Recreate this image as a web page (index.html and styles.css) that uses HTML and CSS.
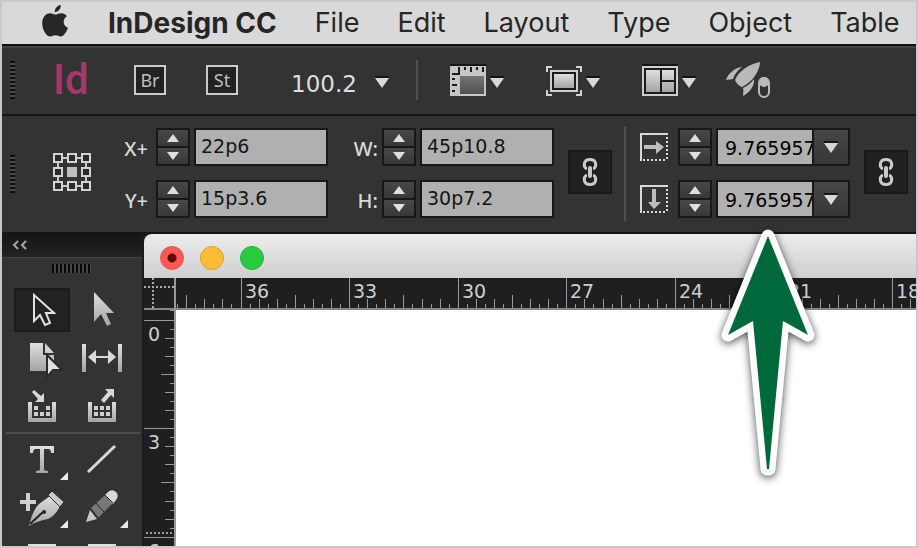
FILE: index.html
```html
<!DOCTYPE html>
<html lang="en">
<head>
<meta charset="utf-8">
<title>InDesign CC</title>
<link rel="stylesheet" href="styles.css">
</head>
<body>
<svg class="defs" width="0" height="0" aria-hidden="true">
  <defs>
    <linearGradient id="metal" x1="0" y1="0" x2="0" y2="1"><stop offset="0" stop-color="#dedede"/><stop offset="1" stop-color="#a4a4a4"/></linearGradient>
    <linearGradient id="shade" x1="0" y1="0" x2="0" y2="1"><stop offset="0" stop-color="#757575"/><stop offset="1" stop-color="#505050"/></linearGradient>
    <symbol id="down" viewBox="0 0 14 12"><path d="M0 0h14v2H0z" fill="#151515"/><path d="M0 2h14L7 12z" fill="#d8d8d8"/></symbol>
    <symbol id="up-small" viewBox="0 0 12 8"><path d="M6 0l6 8H0z" fill="#dedede"/></symbol>
    <symbol id="down-small" viewBox="0 0 12 8"><path d="M0 0h12L6 8z" fill="#dedede"/></symbol>
    <symbol id="link" viewBox="0 0 16 30">
      <g fill="none" stroke="#c9c9c9" stroke-width="3"><path d="M5 12C1 10 1 2.500 8 2.500S15 10 11 12"/><path d="M5 18c-4 2-4 9.500 3 9.500S15 20 11 18"/></g>
      <rect x="5" y="8" width="6" height="14" rx="3" fill="#202020"/>
      <rect x="6" y="9" width="4" height="12" rx="2" fill="#c9c9c9"/>
    </symbol>
  </defs>
</svg>
<div class="app">
  <nav class="menubar" aria-label="Menu bar">
    <a href="#" class="apple" aria-label="Apple"><svg width="26" height="32" viewBox="0 0 26 32"><path fill="#262626" d="M18.800 0c.3 3.700-2.600 7.100-6 7.200C12.400 3.700 15.500.5 18.800 0zM13.200 9.600c1.400 0 3.400-1.400 5.900-1.400 2.400.1 4.500 1.100 5.800 3-4.600 2.800-4.200 9.500 1 11.500-1.200 3.700-4.200 8.700-7 8.800-1.900 0-2.800-1.200-5.300-1.200s-3.500 1.200-5.300 1.200C4.300 31.500.2 24.400.2 18.400c0-6.300 3.800-9.900 7.800-10.100 2.300 0 3.900 1.300 5.200 1.300z"/></svg></a>
    <a href="#" class="name">InDesign CC</a>
    <a href="#">File</a><a href="#">Edit</a><a href="#">Layout</a><a href="#">Type</a><a href="#">Object</a><a href="#">Table</a>
  </nav>

  <header class="appbar">
    <span class="grip"></span>
    <span class="logo">Id</span>
    <button class="badge">Br</button>
    <button class="badge">St</button>
    <div class="zoom">
      <select aria-label="Zoom level"><option>100.2</option></select>
      <svg width="14" height="12"><use href="#down"/></svg>
    </div>
    <span class="rule"></span>
    <button class="view" aria-label="View options">
      <svg width="36" height="32" viewBox="0 0 36 32"><path d="M0 0h36v2H0z" fill="#151515"/><path d="M0 2h36v30H0z" fill="#c6c6c6"/><path d="M10 12h24v18H10z" fill="url(#shade)"/><path d="M9 3v7H2M2 15h3M2 21h5M2 27h3M15 3v3M21 3v5M27 3v3M33 3v5" fill="none" stroke="#1b1b1b" stroke-width="2"/></svg>
      <svg class="arrow" width="14" height="12"><use href="#down"/></svg>
    </button>
    <button class="view" aria-label="Screen mode">
      <svg width="36" height="32" viewBox="0 0 36 32"><path d="M1 8V3h5M30 3h5v5M35 26v5h-5M6 31H1v-5" fill="none" stroke="#d2d2d2" stroke-width="2"/><path d="M5 7h26v20H5z" fill="#1b1b1b" stroke="#cfcfcf" stroke-width="2"/><path d="M8 10h20v14H8z" fill="url(#metal)"/></svg>
      <svg class="arrow" width="14" height="12"><use href="#down"/></svg>
    </button>
    <button class="view" aria-label="Arrange documents">
      <svg width="36" height="32" viewBox="0 0 36 32"><path d="M0 0h36v2H0z" fill="#151515"/><path d="M1 3h34v28H1z" fill="#1b1b1b" stroke="#cfcfcf" stroke-width="2"/><path d="M4 6h14v22H4zM20 6h12v10H20zM20 18h12v10H20z" fill="url(#metal)"/></svg>
      <svg class="arrow" width="14" height="12"><use href="#down"/></svg>
    </button>
    <button class="gpu" aria-label="GPU performance">
      <svg width="44" height="36" viewBox="0 0 44 36"><g fill="#b9b9b9"><path d="M34 0c0 8-7 20-18 25-3-1-6-4-7-7C13 8 24 2 34 0z"/><path d="M16 5C8 6 2 12 0 18c2 0 5-1 7-1 1-4 4-8 9-12z"/><path d="M28 17c1 7-5 14-11 17 0-3 1-6 0-8 5-2 8-5 11-9z"/></g><rect x="33" y="16" width="10" height="19" rx="5" fill="#333" stroke="#b9b9b9" stroke-width="2"/><circle cx="38" cy="20" r="5" fill="#b9b9b9"/></svg>
    </button>
  </header>

  <section class="control" aria-label="Control panel">
    <span class="grip"></span>
    <button class="refpoint" aria-label="Reference point">
      <svg width="38" height="38" viewBox="0 0 38 38"><path d="M5 5h28v28H5z" fill="none" stroke="#c9c9c9" stroke-width="2"/><g fill="#2a2a2a" stroke="#d2d2d2" stroke-width="2"><path d="M1 1h8v8H1zM15 1h8v8h-8zM29 1h8v8h-8zM1 15h8v8H1zM29 15h8v8h-8zM1 29h8v8H1zM15 29h8v8h-8zM29 29h8v8h-8z"/></g><path d="M14 14h10v10H14z" fill="#c0c0c0"/></svg>
    </button>
    <div class="fields pos">
      <label for="x">X+</label>
      <span class="stepper"><button aria-label="Increase X"><svg width="12" height="8"><use href="#up-small"/></svg></button><button aria-label="Decrease X"><svg width="12" height="8"><use href="#down-small"/></svg></button></span>
      <input id="x" value="22p6">
      <label for="y">Y+</label>
      <span class="stepper"><button aria-label="Increase Y"><svg width="12" height="8"><use href="#up-small"/></svg></button><button aria-label="Decrease Y"><svg width="12" height="8"><use href="#down-small"/></svg></button></span>
      <input id="y" value="15p3.6">
    </div>
    <div class="fields size">
      <label for="w">W:</label>
      <span class="stepper"><button aria-label="Increase width"><svg width="12" height="8"><use href="#up-small"/></svg></button><button aria-label="Decrease width"><svg width="12" height="8"><use href="#down-small"/></svg></button></span>
      <input id="w" value="45p10.8">
      <label for="h">H:</label>
      <span class="stepper"><button aria-label="Increase height"><svg width="12" height="8"><use href="#up-small"/></svg></button><button aria-label="Decrease height"><svg width="12" height="8"><use href="#down-small"/></svg></button></span>
      <input id="h" value="30p7.2">
    </div>
    <button class="chain" aria-label="Constrain width and height"><svg width="16" height="30"><use href="#link"/></svg></button>
    <span class="rule"></span>
    <div class="fields scale">
      <label for="sx" aria-label="Scale X"><svg width="28" height="28" viewBox="0 0 28 28"><path d="M1 28V1h27" fill="none" stroke="#d8d8d8" stroke-width="2"/><path d="M27 4v24M3 27h24" fill="none" stroke="#d8d8d8" stroke-width="2" stroke-dasharray="2 2"/><path d="M4 12h12V8l8 6-8 7v-5H4z" fill="#bdbdbd"/></svg></label>
      <span class="stepper"><button aria-label="Increase scale X"><svg width="12" height="8"><use href="#up-small"/></svg></button><button aria-label="Decrease scale X"><svg width="12" height="8"><use href="#down-small"/></svg></button></span>
      <span class="combo"><input id="sx" value="9.765957"><button aria-label="Scale X presets"><svg width="14" height="12"><use href="#down"/></svg></button></span>
      <label for="sy" aria-label="Scale Y"><svg width="28" height="28" viewBox="0 0 28 28"><path d="M1 28V1h27" fill="none" stroke="#d8d8d8" stroke-width="2"/><path d="M27 4v24M3 27h24" fill="none" stroke="#d8d8d8" stroke-width="2" stroke-dasharray="2 2"/><path d="M12 4h4v13h5l-7 7-6-7h4z" fill="#bdbdbd"/></svg></label>
      <span class="stepper"><button aria-label="Increase scale Y"><svg width="12" height="8"><use href="#up-small"/></svg></button><button aria-label="Decrease scale Y"><svg width="12" height="8"><use href="#down-small"/></svg></button></span>
      <span class="combo"><input id="sy" value="9.765957"><button aria-label="Scale Y presets"><svg width="14" height="12"><use href="#down"/></svg></button></span>
    </div>
    <button class="chain" aria-label="Constrain scale"><svg width="16" height="30"><use href="#link"/></svg></button>
  </section>

  <main class="workspace">
    <aside class="tools" aria-label="Tools">
      <button class="collapse" aria-label="Collapse panel"><svg width="16" height="10" viewBox="0 0 16 10"><path d="M6 1L2 5l4 4M14 1l-4 4 4 4" fill="none" stroke="#a5a5a5" stroke-width="2"/></svg></button>
      <span class="grip-h"></span>
      <div class="toolgrid">
        <button class="on" aria-label="Selection"><svg width="56" height="44" viewBox="0 0 56 44"><path d="M20 7v26l6-6 5 10 5-2-4-10h8z" fill="#232323" stroke="#e2e2e2" stroke-width="2"/></svg></button>
        <button aria-label="Direct selection"><svg width="56" height="44" viewBox="0 0 56 44"><path d="M20 4v30l7-8 6 12 4-2-5-11h8z" fill="url(#metal)"/></svg></button>
        <button aria-label="Page"><svg width="56" height="44" viewBox="0 0 56 44"><path d="M16 7h13v12h11v16H16z" fill="url(#metal)"/><path d="M31 7l9 10h-9z" fill="#d0d0d0"/><path d="M33 19v22l6-7h9z" fill="#e0e0e0" stroke="#2b2b2b" stroke-width="2"/></svg></button>
        <button aria-label="Gap"><svg width="56" height="44" viewBox="0 0 56 44"><path d="M8 8h4v28H8zM44 8h4v28h-4z" fill="url(#metal)"/><path d="M14 21l8-7v6h12v-6l8 7-8 7v-6H22v6z" fill="#dadada"/></svg></button>
        <button aria-label="Content collector"><svg width="56" height="44" viewBox="0 0 56 44"><path d="M14 18h4v16h20V18h4v20H14z" fill="url(#metal)"/><path d="M20 22h4v4h-4zM32 22h4v4h-4zM20 28h4v4h-4zM26 28h4v4h-4zM32 28h4v4h-4z" fill="#cfcfcf"/><path d="M20 6l7 6 3-3v9h-9l3-3-6-7z" fill="#d8d8d8"/></svg></button>
        <button aria-label="Content placer"><svg width="56" height="44" viewBox="0 0 56 44"><path d="M14 18h4v16h20V18h4v20H14z" fill="url(#metal)"/><path d="M20 22h4v4h-4zM26 22h4v4h-4zM32 22h4v4h-4zM20 28h4v4h-4zM26 28h4v4h-4zM32 28h4v4h-4z" fill="#cfcfcf"/><path d="M31 5h9v9l-3-3-7 8-3-3 7-8z" fill="#d8d8d8"/></svg></button>
        <hr>
        <button aria-label="Type"><svg width="56" height="44" viewBox="0 0 56 44"><path d="M16 8h24v7h-3c0-3-1-4-3-4h-4v20c0 1 1 2 4 2v2H22v-2c3 0 4-1 4-2V11h-4c-2 0-3 1-3 4h-3z" fill="url(#metal)"/><path d="M54 34v8h-8z" fill="#e8e8e8"/></svg></button>
        <button aria-label="Line"><svg width="56" height="44" viewBox="0 0 56 44"><path d="M14 34L41 8" stroke="#d8d8d8" stroke-width="3"/></svg></button>
        <button aria-label="Pen"><svg width="56" height="44" viewBox="0 0 56 44"><path d="M6 14h6V7h4v7h6v4h-6v7h-4v-7H6z" fill="#cfcfcf"/><path d="M15 40c2-9 5-17 10-22l11-8 10 10c-3 6-6 10-12 13-6 1-13 3-19 7z" fill="url(#metal)"/><path d="M16 38l13-12" stroke="#222" stroke-width="2"/><circle cx="30" cy="26" r="2" fill="#222"/><path d="M38 5l12 11-4 5L34 9z" fill="#c8c8c8" stroke="#2b2b2b"/><path d="M54 34v8h-8z" fill="#e8e8e8"/></svg></button>
        <button aria-label="Pencil"><svg width="56" height="44" viewBox="0 0 56 44"><path d="M12 36l4-12 7 9z" fill="#c6c6c6"/><path d="M17 22L31 9l8 8-15 15z" fill="#777"/><path d="M31 9l3-3a5 5 0 0 1 8 8l-3 4z" fill="#d8d8d8"/><path d="M17 23l7 9M22 17l8 9M31 9l8 8" stroke="#222" stroke-width="1"/><path d="M54 34v8h-8z" fill="#e8e8e8"/></svg></button>
        <button aria-label="Frame"><svg width="56" height="44" viewBox="0 0 56 44"><path d="M15 11h26v20H15z" fill="none" stroke="#e0e0e0" stroke-width="2"/></svg></button>
        <button aria-label="Rectangle"><svg width="56" height="44" viewBox="0 0 56 44"><path d="M15 11h26v20H15z" fill="none" stroke="#e0e0e0" stroke-width="2"/></svg></button>
      </div>
    </aside>
    <article class="document">
      <div class="titlebar"><button class="close" aria-label="Close"></button><button class="minimize" aria-label="Minimize"></button><button class="expand" aria-label="Zoom window"></button></div>
      <div class="canvas">
        <svg class="corner" viewBox="0 0 30 30"><path d="M9 0v30M0 9h30" stroke="#aaa" stroke-width="2" stroke-dasharray="2 2"/></svg>
        <svg class="ruler-x" id="ruler-x"></svg>
        <svg class="ruler-y" id="ruler-y"></svg>
        <div class="page"></div>
      </div>
    </article>
  </main>
  <svg class="pointer" width="116" height="264" viewBox="710 222 116 264" aria-hidden="true"><path d="M768 236L808 335 783 321 769 469H767L753 321 728 335z" fill="#00693c" stroke="#fff" stroke-width="13" stroke-linejoin="round" paint-order="stroke"/></svg>
</div>
<script src="ruler.js"></script>
</body>
</html>
```
FILE: styles.css
```css
* { box-sizing: border-box; }
body { margin: 0; background: #c9c9c9; }
button { padding: 0; border: 0; background: none; font: inherit; color: inherit; display: flex; align-items: center; justify-content: center; }
svg { display: block; flex: none; }
.defs { position: absolute; }
.app { position: relative; height: 100vh; border: 2px solid #c9c9c9; display: flex; flex-direction: column; overflow: hidden; background: #333; font-family: "DejaVu Sans", sans-serif; }

.menubar { flex: none; height: 42px; background: #d9d9d9; display: flex; align-items: center; gap: 38px; padding-left: 40px; font: 27px/40px Inter, sans-serif; white-space: nowrap; }
.menubar a { color: #262626; text-decoration: none; }
.menubar .name { font-weight: 700; font-size: 28px; }
.menubar .apple { margin: 0 2px 4px 0; }

.appbar { flex: none; height: 72px; border-top: 2px solid #111; border-bottom: 2px solid #151515; box-shadow: inset 0 2px #424242; display: flex; align-items: center; padding-left: 8px; }
.grip { flex: none; width: 5px; height: 38px; background: repeating-linear-gradient(#0c0c0c 0 2px, #4a4a4a 2px 4px); }
.logo { width: 80px; padding-left: 38px; margin-right: 39px; font: 500 42px/48px Roboto, sans-serif; color: #a43a6b; }
.badge { width: 32px; height: 30px; margin-right: 40px; border: 2px solid #cacaca; background: #222; color: #bdbdbd; font: 18px/24px "Noto Sans", sans-serif; }
.zoom { display: flex; align-items: center; width: 140px; padding: 4px 0 0 13px; }
.zoom select { appearance: none; border: 0; padding: 4px 0 0; margin: 0; width: 84px; background: none; color: #dedede; font: 23px/30px "DejaVu Sans", sans-serif; }
.rule { flex: none; width: 2px; background: #505050; }
.appbar .rule { height: 40px; margin: 0 32px 0 -2px; }
.view { gap: 4px; margin-right: 42px; }
.arrow { margin-top: 4px; }
.gpu { margin-left: -12px; }

.control { flex: none; height: 118px; border-bottom: 2px solid #151515; display: flex; align-items: center; padding-left: 8px; }
.refpoint { margin: 0 22px 4px 38px; }
.fields { flex: none; display: grid; align-items: center; row-gap: 14px; column-gap: 4px; margin-bottom: 2px; }
.fields label { font: 500 20px/28px "Noto Sans", sans-serif; color: #d8d8d8; text-align: right; padding: 4px 4px 0 0; }
.pos { grid-template-columns: 39px 34px 134px; }
.size { grid-template-columns: 50px 34px 134px; }
.size label { padding-right: 0; }
.scale { grid-template-columns: 34px 34px 134px; margin-left: 14px; }
.stepper { height: 38px; display: grid; grid-template-rows: 1fr 1fr; gap: 2px; padding: 2px; background: #181818; }
.stepper button { background: linear-gradient(#474747, #383838); }
.fields input { width: 100%; min-width: 0; height: 38px; border: 2px solid #181818; padding: 0 0 2px 5px; background: #b0b0b0; color: #151515; font: 19px/30px "DejaVu Sans", sans-serif; }
.combo { display: grid; grid-template-columns: 1fr 38px; }
.fields .combo input { border-right: 0; padding: 2px 0 0 7px; color: #000; }
.combo button { height: 38px; border: 2px solid #181818; background: linear-gradient(#474747, #363636); }
.scale label { padding-top: 0; }
.chain { flex: none; width: 44px; height: 44px; margin: 0 12px 4px 14px; background: #202020; border: 2px solid #191919; }
.control > .rule { height: 94px; }

.workspace { flex: 1; min-height: 0; display: flex; overflow: hidden; background: #1b1b1b; }
.tools { flex: none; width: 140px; background: #333; }
.collapse { width: 100%; height: 24px; background: linear-gradient(#151515, #232323); border-bottom: 1px solid #444; justify-content: flex-start; padding: 0 0 2px 10px; }
.grip-h { display: block; width: 39px; height: 9px; margin: 6px 0 15px 50px; background: repeating-linear-gradient(90deg, #0a0a0a 0 2px, #444 2px 4px); }
.toolgrid { display: grid; grid-template-columns: 56px 56px; gap: 4px; padding: 0 12px; }
.toolgrid .on { background: #222; outline: 2px solid #1b1b1b; outline-offset: -2px; }
.toolgrid hr { grid-column: 1 / -1; width: 134px; height: 2px; margin: 0 -8px; border: 0; background: #4d4d4d; }

.document { flex: 1; min-width: 0; margin-left: 2px; display: flex; flex-direction: column; }
.titlebar { flex: none; height: 44px; border-radius: 8px 0 0 0; background: linear-gradient(#ececec, #cfcfcf); display: flex; align-items: center; gap: 16px; padding: 4px 0 0 16px; }
.titlebar button { width: 24px; height: 24px; border-radius: 50%; }
.close { background: radial-gradient(circle, #600 0 4px, #fc5b55 5px); border: 1px solid #e5504a; }
.minimize { background: #fdbc37; border: 1px solid #dfa02e; }
.expand { background: #2bca43; border: 1px solid #25ad38; }
.canvas { flex: 1; min-height: 0; display: grid; grid-template-columns: 32px 1fr; grid-template-rows: 32px 1fr; overflow: hidden; }
.corner, .ruler-x, .ruler-y { width: 100%; height: 100%; min-height: 0; min-width: 0; background: #1f1f1f; fill: #cecece; font: 19px "DejaVu Sans", sans-serif; overflow: hidden; }
.corner, .ruler-x { border-bottom: 2px solid #888; }
.corner, .ruler-y { border-right: 2px solid #999; }
.page { background: #fff; }

.pointer { position: absolute; left: 708px; top: 220px; filter: drop-shadow(0 2px 4px rgba(0, 0, 0, 0.7)); }
```
FILE: ruler.js
```js
// Draws the pica rulers: a labelled line every three picas, twelve ticks between.
const STEP = 108.6;
const NS = "http://www.w3.org/2000/svg";

function rect(svg, x, y, width, height) {
  const r = document.createElementNS(NS, "rect");
  Object.entries({ x, y, width, height, fill: "#999" }).forEach(([k, v]) => r.setAttribute(k, v));
  svg.append(r);
}

function label(svg, x, y, value) {
  const t = document.createElementNS(NS, "text");
  t.setAttribute("x", x);
  t.setAttribute("y", y);
  t.textContent = value;
  svg.append(t);
}

function draw(id, origin, first, delta, vertical) {
  const svg = document.getElementById(id);
  const box = svg.getBoundingClientRect();
  const extent = vertical ? box.height : box.width;
  svg.replaceChildren();
  for (let i = -12; ; i++) {
    const at = Math.floor(origin + (i * STEP) / 12);
    if (at < 0) continue;
    if (at >= extent) break;
    const n = ((i % 12) + 12) % 12;
    const len = n === 0 ? 30 : n === 6 ? 13 : n % 2 ? 4 : 9;
    if (vertical) rect(svg, 30 - len, at, len, 1);
    else rect(svg, at, 30 - len, 1, len);
    if (n === 0) {
      const value = Math.abs(first + (delta * i) / 12);
      if (vertical) label(svg, 4, at + 21, value);
      else label(svg, at + 4, 20, value);
    }
  }
}

function drawRulers() {
  draw("ruler-x", 65, 36, -3, false);
  draw("ruler-y", 10, 0, 3, true);
  const side = document.getElementById("ruler-y");
  for (let x = 2; x < 30; x += 4) rect(side, x, 222, 2, 2);
}

drawRulers();
window.addEventListener("resize", drawRulers);
```
